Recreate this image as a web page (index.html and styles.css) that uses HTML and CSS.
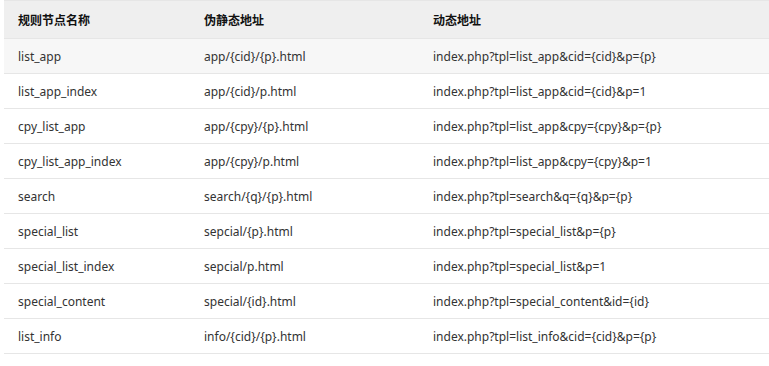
FILE: index.html
```html
<!DOCTYPE html>
<html lang="zh">
<head>
<meta charset="utf-8">
<link rel="stylesheet" href="styles.css">
</head>
<body>
<table class="rules">
  <colgroup><col class="c1"><col class="c2"><col class="c3"></colgroup>
  <thead>
    <tr><th>规则节点名称</th><th>伪静态地址</th><th>动态地址</th></tr>
  </thead>
  <tbody>
    <tr class="hl"><td>list_app</td><td>app/{cid}/{p}.html</td><td>index.php?tpl=list_app&amp;cid={cid}&amp;p={p}</td></tr>
    <tr><td>list_app_index</td><td>app/{cid}/p.html</td><td>index.php?tpl=list_app&amp;cid={cid}&amp;p=1</td></tr>
    <tr><td>cpy_list_app</td><td>app/{cpy}/{p}.html</td><td>index.php?tpl=list_app&amp;cpy={cpy}&amp;p={p}</td></tr>
    <tr><td>cpy_list_app_index</td><td>app/{cpy}/p.html</td><td>index.php?tpl=list_app&amp;cpy={cpy}&amp;p=1</td></tr>
    <tr><td>search</td><td>search/{q}/{p}.html</td><td>index.php?tpl=search&amp;q={q}&amp;p={p}</td></tr>
    <tr><td>special_list</td><td>sepcial/{p}.html</td><td>index.php?tpl=special_list&amp;p={p}</td></tr>
    <tr><td>special_list_index</td><td>sepcial/p.html</td><td>index.php?tpl=special_list&amp;p=1</td></tr>
    <tr><td>special_content</td><td>special/{id}.html</td><td>index.php?tpl=special_content&amp;id={id}</td></tr>
    <tr><td>list_info</td><td>info/{cid}/{p}.html</td><td>index.php?tpl=list_info&amp;cid={cid}&amp;p={p}</td></tr>
  </tbody>
</table>
</body>
</html>
```
FILE: styles.css
```css
html, body {
  margin: 0;
  padding: 0;
  background: #fff;
  overflow: hidden;
}
body {
  padding-left: 4px;
  font-family: "Noto Sans", "Noto Sans CJK SC", sans-serif;
  font-size: 12px;
  color: #333;
}
.rules {
  border-collapse: collapse;
  width: 780px;
  table-layout: fixed;
}
.rules .c1 { width: 186px; }
.rules .c2 { width: 229px; }
.rules th, .rules td {
  text-align: left;
  padding: 0 0 0 14px;
  border-top: 1px solid #e6e6e6;
  border-bottom: 1px solid #e6e6e6;
  white-space: nowrap;
}
.rules th {
  height: 37px;
  background: #efefef;
  font-family: "Noto Sans CJK SC", sans-serif;
  font-weight: bold;
  color: #111;
}
.rules td {
  height: 34px;
}
.rules tr.hl td {
  background: #f7f7f7;
}
```
